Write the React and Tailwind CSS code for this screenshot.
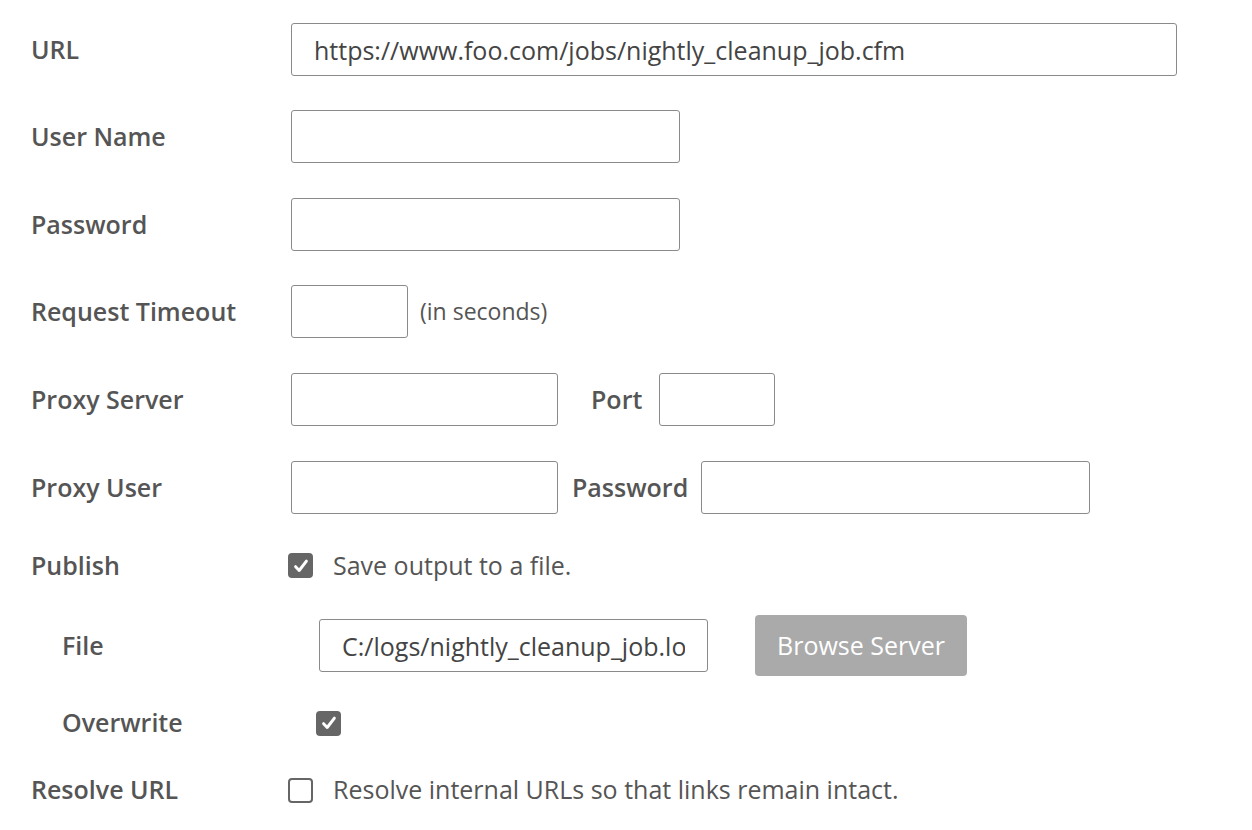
import React from 'react';

const font = {fontFamily: '"Open Sans", "Noto Sans", sans-serif'};

function Label({ children, indent }) {
    return (
        <div className={`w-[260px] shrink-0 text-[25px] font-semibold text-[#555] ${indent ? 'pl-[31px]' : ''}`}>
            {children}
        </div>
    );
}

function Field({ className, value }) {
    return (
        <input
            readOnly
            value={value || ''}
            className={`h-[53px] rounded-[3px] border border-[#8a8a8a] bg-white px-[22px] text-[25px] text-[#444] outline-none ${className}`}
        />
    );
}

function CheckBox({ checked }) {
    if (!checked) {
        return <div className="h-[25px] w-[25px] rounded-[4px] border-2 border-[#666] bg-white" />;
    }
    return (
        <div className="flex h-[25px] w-[25px] items-center justify-center rounded-[4px] bg-[#666]">
            <svg width="18" height="18" viewBox="0 0 16 16" fill="none">
                <path d="M3.2 8.6 L6.4 12 L12.8 3.6" stroke="white" strokeWidth="2.6" strokeLinecap="round" strokeLinejoin="round" />
            </svg>
        </div>
    );
}

export default function App() {
    return (
        <div style={font} className="min-h-[830px] w-[1252px] bg-white pl-[31px] pt-[23px]">
            <div className="flex items-center">
                <Label>URL</Label>
                <Field className="w-[886px]" value="https://www.foo.com/jobs/nightly_cleanup_job.cfm" />
            </div>
            <div className="mt-[34px] flex items-center">
                <Label>User Name</Label>
                <Field className="w-[389px]" />
            </div>
            <div className="mt-[35px] flex items-center">
                <Label>Password</Label>
                <Field className="w-[389px]" />
            </div>
            <div className="mt-[34px] flex items-center">
                <Label>Request Timeout</Label>
                <Field className="w-[117px]" />
                <span className="ml-[12px] text-[23px] text-[#555]">(in seconds)</span>
            </div>
            <div className="mt-[35px] flex items-center">
                <Label>Proxy Server</Label>
                <Field className="w-[267px]" />
                <span className="ml-[33px] w-[68px] text-[25px] font-semibold text-[#555]">Port</span>
                <Field className="w-[116px]" />
            </div>
            <div className="mt-[35px] flex items-center">
                <Label>Proxy User</Label>
                <Field className="w-[267px]" />
                <span className="ml-[14px] w-[129px] text-[25px] font-semibold text-[#555]">Password</span>
                <Field className="w-[389px]" />
            </div>
            <div className="mt-[34px] flex h-[35px] items-center">
                <div className="w-[257px] shrink-0 text-[25px] font-semibold text-[#555]">Publish</div>
                <CheckBox checked />
                <span className="ml-[20px] text-[25px] text-[#555]">Save output to a file.</span>
            </div>
            <div className="mt-[32px] flex items-center">
                <Label indent>File</Label>
                <div className="ml-[28px] flex items-center">
                    <Field className="w-[389px]" value="C:/logs/nightly_cleanup_job.log" />
                    <button className="ml-[47px] h-[61px] w-[212px] rounded-[4px] bg-[#aaaaaa] text-[25px] text-white">
                        Browse Server
                    </button>
                </div>
            </div>
            <div className="mt-[32px] flex h-[30px] items-center">
                <div className="w-[285px] shrink-0 pl-[31px] text-[25px] font-semibold text-[#555]">Overwrite</div>
                <CheckBox checked />
            </div>
            <div className="mt-[37px] flex h-[30px] items-center">
                <div className="w-[257px] shrink-0 text-[25px] font-semibold text-[#555]">Resolve URL</div>
                <CheckBox />
                <span className="ml-[20px] text-[25px] text-[#555]">Resolve internal URLs so that links remain intact.</span>
            </div>
        </div>
    );
}
